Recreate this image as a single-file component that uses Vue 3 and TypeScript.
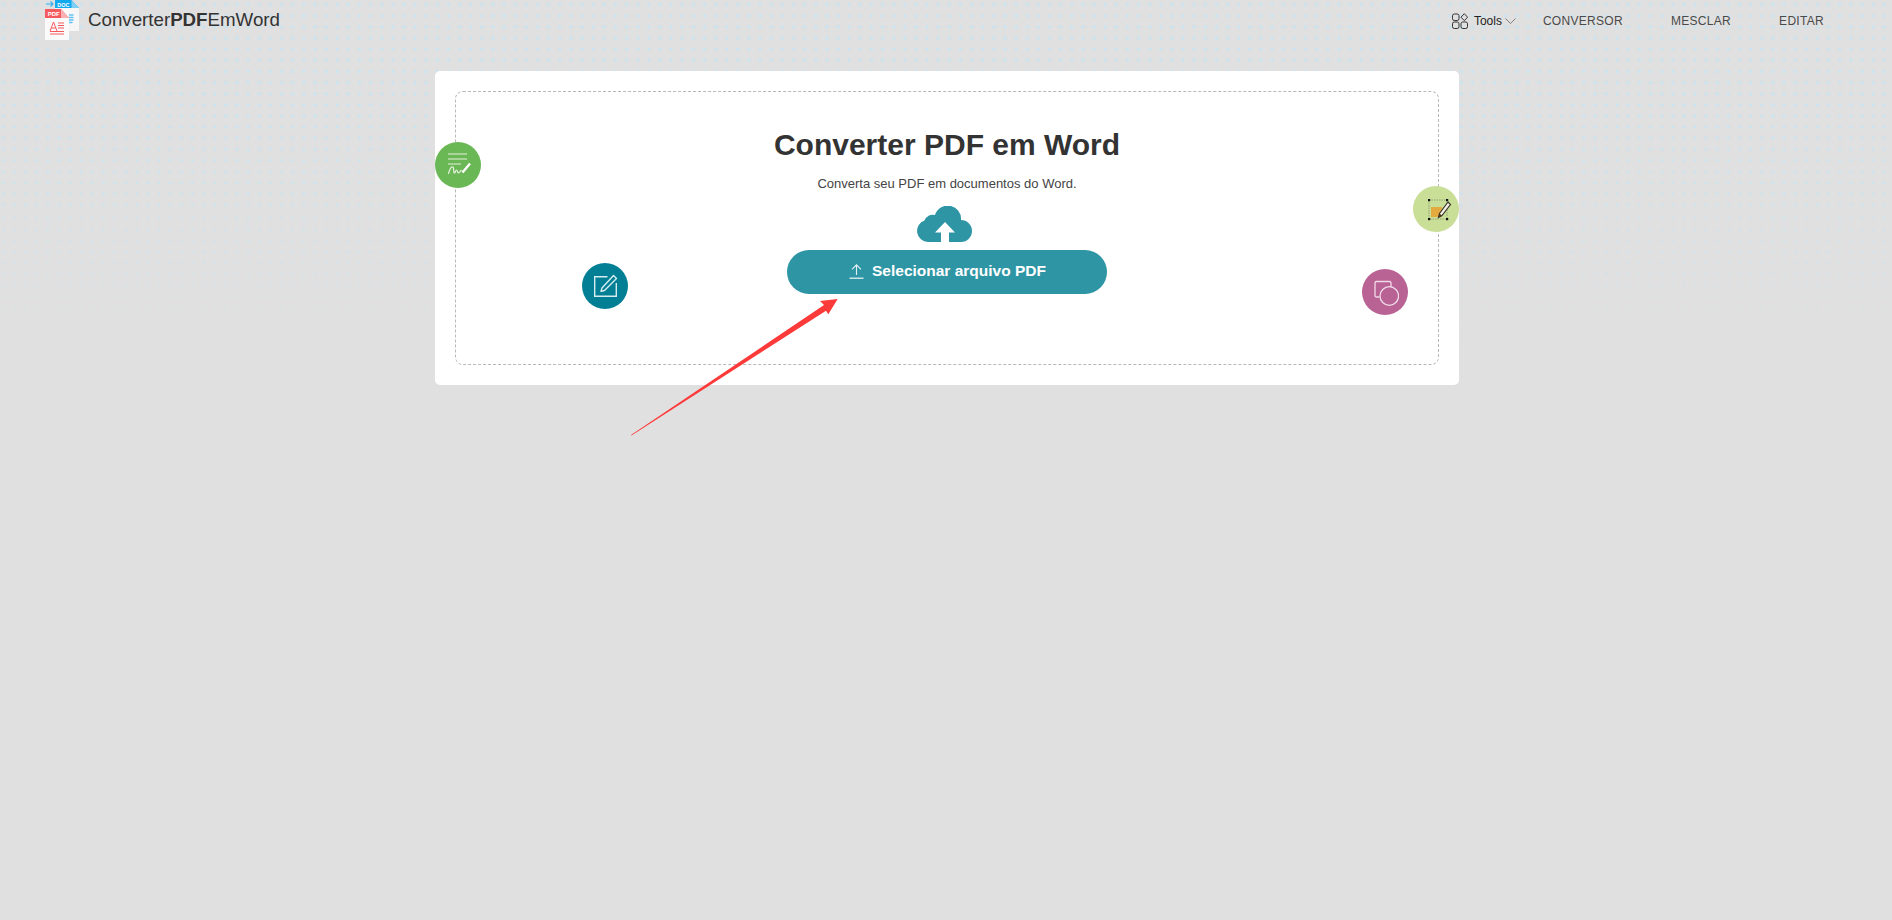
<script setup lang="ts">
const navLinks: string[] = ['CONVERSOR', 'MESCLAR', 'EDITAR']
</script>

<template>
  <div class="page">
    <div class="dots" aria-hidden="true">
      <svg class="dots-top" width="100%" height="212">
        <defs>
          <pattern id="dot-a" width="11.13" height="11.13" patternUnits="userSpaceOnUse" x="-2.26" y="-0.87">
            <circle cx="5.565" cy="5.565" r="1.7" fill="#c8e3f1" />
          </pattern>
        </defs>
        <rect width="100%" height="100%" fill="url(#dot-a)" />
      </svg>
      <svg class="dots-bottom" width="100%" height="150">
        <defs>
          <pattern id="dot-b" width="11.13" height="11.13" patternUnits="userSpaceOnUse" x="-2.26" y="1">
            <circle cx="5.565" cy="5.565" r="1.7" fill="#c8e3f1" />
          </pattern>
        </defs>
        <rect width="100%" height="100%" fill="url(#dot-b)" />
      </svg>
    </div>

    <header class="topbar">
      <a class="brand">
        <svg class="brand-icon" width="34" height="40" viewBox="0 0 34 40">
          <path d="M1 4h7M5.500 1.500 8 4 5.500 6.500" fill="none" stroke="#35b0ea" stroke-width="1.200" />
          <path d="M10 8h24v23H10z" fill="#f6f6f6" />
          <path d="M10 0h16.500L34 8H10z" fill="#13a9ee" />
          <path d="M26.500 0 34 8h-7.500z" fill="#7fd0f5" />
          <text x="12.300" y="6.500" class="logo-doc">DOC</text>
          <path d="M24 15h4.500M24 17.500h4.500M24 20h4.500M24 22.500h3.500" stroke="#62c3f2" stroke-width="1.300" />
          <path d="M0 9h24v31H0z" fill="#fafafa" />
          <path d="M0 9h16l8 9H0z" fill="#f4595f" />
          <path d="M16 9l8 9h-8z" fill="#fbb0b2" />
          <text x="2.700" y="16" class="logo-pdf">PDF</text>
          <path d="M5 31 8.500 22 12 31M6.300 28h4.400" fill="none" stroke="#f4595f" stroke-width="1" />
          <path d="M13 23h6M13 25.500h6M13 28h6M5 31.500h14M5 34h14" stroke="#f4595f" stroke-width="1" />
        </svg>
        <span class="brand-name">Converter<b>PDF</b>EmWord</span>
      </a>

      <nav class="nav">
        <a class="tools">
          <svg width="16" height="16" viewBox="0 0 16 16" fill="none" stroke="#333" stroke-width="1">
            <rect x="0.500" y="1" width="6.500" height="6.500" rx="1.800" />
            <path d="M12.300 0.700 15.600 4.200 12.300 7.700 9 4.200z" />
            <rect x="0.500" y="9" width="6.500" height="6.500" rx="1.800" />
            <rect x="9" y="9" width="6.500" height="6.500" rx="1.800" />
          </svg>
          <span>Tools</span>
          <svg width="11" height="6" viewBox="0 0 11 6" fill="none" stroke="#666" stroke-width="0.800">
            <path d="M0.500 0.500 5.500 5.500 10.500 0.500" />
          </svg>
        </a>
        <div class="nav-links">
          <a v-for="link in navLinks" :key="link" class="nav-link">{{ link }}</a>
        </div>
      </nav>
    </header>

    <main class="main">
      <section class="card">
        <div class="dropzone">
          <h1>Converter PDF em Word</h1>
          <p>Converta seu PDF em documentos do Word.</p>
          <svg class="cloud" width="55" height="36" viewBox="0 0 55 36">
            <path d="M11 36a11 11 0 0 1-3.500-21.400a8.500 8.500 0 0 1 10.500-5.500A13.300 13.300 0 0 1 44 14a11 11 0 0 1 0 22z" fill="#2e95a5" />
            <path d="M28 16 38 26.500H32V36H24V26.500H18z" fill="#fff" />
          </svg>
          <button class="select" type="button">
            <svg width="15" height="15" viewBox="0 0 15 15" fill="none" stroke="#e4f1f3" stroke-width="1.100">
              <path d="M7.500 11V0.800M3 5.300 7.500 0.800 12 5.300" />
              <path d="M0.500 14.200h14" stroke-width="1.300" />
            </svg>
            <span>Selecionar arquivo PDF</span>
          </button>
        </div>

        <span class="bubble green">
          <svg width="26" height="26" viewBox="0 0 26 26" fill="none" stroke="#e6f2df" stroke-width="1.200">
            <path d="M3 2h19M3 7h19M3 12h13" />
            <path d="M3.500 22c1-5 3-8 4.500-7 1.500 1 0 6 1.500 6 1 0 1-3 2-3 1 0 1 3 2 3 1 0 2-2 3-3" />
            <path d="M17.500 20.500 25 11.500" stroke="#fff" stroke-width="2.400" />
          </svg>
        </span>
        <span class="bubble teal">
          <svg width="26" height="26" viewBox="0 0 26 26" fill="none" stroke="#d6edf1" stroke-width="1.400">
            <path d="M15.500 3.700H2.700v19.600h21.600V10" />
            <path d="M21.500 2.500 24.500 5.500 12.500 17.500 9 18.300 10 15z" stroke-linejoin="round" />
          </svg>
        </span>
        <span class="bubble lime">
          <svg class="lime-icon" width="26" height="26" viewBox="0 0 26 26" fill="none">
            <rect x="8" y="11" width="11" height="10" fill="#e3ab3f" />
            <rect x="6" y="4" width="18" height="19" stroke="#7b8a62" stroke-width="0.700" stroke-dasharray="1.500 1" />
            <g fill="#111">
              <rect x="5" y="3" width="2.200" height="2.200" />
              <rect x="23" y="3" width="2.200" height="2.200" />
              <rect x="5" y="22" width="2.200" height="2.200" />
              <rect x="23" y="22" width="2.200" height="2.200" />
            </g>
            <path d="M25 6 27.500 8.500 19 19.500 15.500 21.500 16.500 17.500z" fill="#f3efe0" stroke="#33302a" stroke-width="1.100" />
            <path d="M16.500 17.500 19 19.500 15.500 21.500z" fill="#4a3718" />
          </svg>
        </span>
        <span class="bubble pink">
          <svg width="28" height="28" viewBox="0 0 28 28" fill="none" stroke="#f1dbe8" stroke-width="1.300">
            <path d="M8.500 19H5.500A1.500 1.500 0 0 1 4 17.500V5A1.500 1.500 0 0 1 5.500 3.500H18.500A1.500 1.500 0 0 1 20 5V9" />
            <circle cx="18.300" cy="18" r="9.300" />
          </svg>
        </span>
      </section>
    </main>

    <svg class="pointer" width="210" height="140" viewBox="0 0 210 140" aria-hidden="true">
      <path d="M1 136 194 6 190 2 207.700 0 198.300 15.300 196 11.700 1.500 136.500z" fill="#fd3a3a" />
    </svg>
  </div>
</template>

<style>
html,
body {
  margin: 0;
  background: #e0e0e0;
}
</style>

<style scoped>
.page {
  position: relative;
  min-height: 920px;
  overflow: hidden;
  background: #e0e0e0;
  font-family: "Liberation Sans", Arial, sans-serif;
  color: #333;
}

.dots {
  position: absolute;
  top: 0;
  left: 0;
  right: 0;
  display: flex;
  flex-direction: column;
}

.dots-top,
.dots-bottom {
  display: block;
}

.dots-top {
  -webkit-mask-image: linear-gradient(to bottom, #000 0, #000 100px, rgba(0, 0, 0, 0.62) 212px);
  mask-image: linear-gradient(to bottom, #000 0, #000 100px, rgba(0, 0, 0, 0.62) 212px);
}

.dots-bottom {
  -webkit-mask-image: linear-gradient(to bottom, rgba(0, 0, 0, 0.6) 0, rgba(0, 0, 0, 0) 142px);
  mask-image: linear-gradient(to bottom, rgba(0, 0, 0, 0.6) 0, rgba(0, 0, 0, 0) 142px);
}

.topbar {
  position: relative;
  display: flex;
  align-items: flex-start;
  justify-content: space-between;
  height: 40px;
  padding: 0 68px 0 45px;
}

.brand {
  display: flex;
  align-items: center;
  height: 40px;
}

.brand-icon {
  display: block;
}

.brand-name {
  margin-left: 9px;
  margin-top: -1px;
  font-size: 18.720px;
  color: #333;
}

.logo-doc,
.logo-pdf {
  font-family: "Liberation Sans", sans-serif;
  font-weight: 700;
  fill: #fff;
}

.logo-doc {
  font-size: 5.500px;
}

.logo-pdf {
  font-size: 6px;
}

.nav {
  display: flex;
  align-items: center;
  height: 40px;
  padding-top: 1px;
}

.tools {
  display: flex;
  align-items: center;
  gap: 6px;
  margin-right: 27px;
  font-size: 12px;
  color: #222;
}

.tools span {
  margin-right: -3px;
}

.nav-links {
  display: flex;
  gap: 48px;
}

.nav-link {
  font-size: 12px;
  letter-spacing: 0.300px;
  color: #4a4a4a;
}

.main {
  position: relative;
  display: flex;
  justify-content: center;
  padding: 31px 0 0 2px;
}

.card {
  position: relative;
  box-sizing: border-box;
  width: 1024px;
  height: 314px;
  padding: 20px;
  border-radius: 5px;
  background: #fff;
}

.dropzone {
  box-sizing: border-box;
  display: flex;
  flex-direction: column;
  align-items: center;
  height: 274px;
  border: 1px dashed #b8b8b8;
  border-radius: 8px;
}

h1 {
  margin: 35px 0 0;
  font-size: 30px;
  line-height: 36px;
  font-weight: 700;
  color: #333;
}

p {
  margin: 13px 0 0;
  font-size: 13px;
  line-height: 16px;
  color: #444;
}

.cloud {
  display: block;
  margin: 14px 5px 0 0;
}

.select {
  display: flex;
  align-items: center;
  justify-content: center;
  gap: 8px;
  width: 320px;
  height: 44px;
  margin-top: 8px;
  padding: 0 0 2px 1px;
  border: 0;
  border-radius: 22px;
  background: #2e95a5;
  font-family: inherit;
  font-size: 15.500px;
  font-weight: 700;
  color: #fff;
}

.bubble {
  position: absolute;
  display: flex;
  align-items: center;
  justify-content: center;
  width: 46px;
  height: 46px;
  border-radius: 50%;
}

.lime-icon {
  overflow: visible;
}

.green {
  left: 0;
  top: 71px;
  background: #6ab755;
}

.teal {
  left: 147px;
  top: 192px;
  background: #027f94;
}

.lime {
  left: 978px;
  top: 115px;
  background: #c9de97;
}

.pink {
  left: 927px;
  top: 198px;
  background: #b96395;
}

.pointer {
  position: absolute;
  left: 630px;
  top: 299px;
}
</style>
